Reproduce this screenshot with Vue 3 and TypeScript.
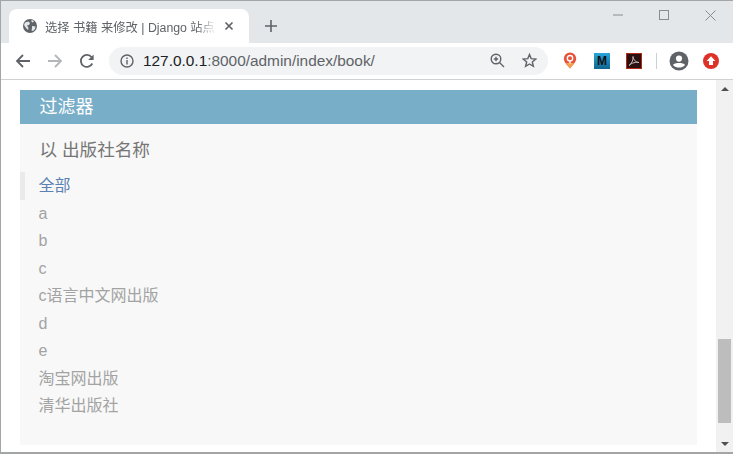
<script setup lang="ts">
const items: string[] = ['a', 'b', 'c', 'c语言中文网出版', 'd', 'e', '淘宝网出版', '清华出版社']
</script>

<template>
  <div class="window">
    <div class="tabstrip">
      <div class="tab">
        <svg class="globe" width="16" height="16" viewBox="0 0 16 16">
          <circle cx="8" cy="8" r="7" fill="#5f6368" />
          <path d="M3 4.5 L6.5 3.5 L8 5 L7 7 L5 7.5 L6.5 10 L6 12 L4 10 L2 7 Z M10 8 L13.5 8.5 L13 11 L11 13 L9.5 12.5 L10 10 Z M9.5 2 L12 3 L11 4.5 L9.5 4 Z" fill="#e4e7ea" />
        </svg>
        <span class="tabtitle">选择 书籍 来修改 | Django 站点管理</span>
        <svg class="tabclose" width="10" height="10" viewBox="0 0 10 10">
          <path d="M1.5 1.5 L8.5 8.5 M8.5 1.5 L1.5 8.5" stroke="#5f6368" stroke-width="1.7" />
        </svg>
      </div>
      <svg class="newtab" width="12" height="12" viewBox="0 0 12 12">
        <path d="M6 0 V12 M0 6 H12" stroke="#5f6368" stroke-width="1.6" />
      </svg>
      <div class="winctrl">
        <svg width="10" height="2" viewBox="0 0 10 2"><path d="M0 1 H10" stroke="#8a8d90" stroke-width="1" /></svg>
        <svg width="10" height="10" viewBox="0 0 10 10"><rect x="0.5" y="0.5" width="9" height="9" fill="none" stroke="#8a8d90" /></svg>
        <svg width="11" height="11" viewBox="0 0 11 11"><path d="M0.5 0.5 L10.5 10.5 M10.5 0.5 L0.5 10.5" stroke="#8a8d90" /></svg>
      </div>
    </div>

    <div class="toolbar">
      <svg class="nav" width="16" height="16" viewBox="0 0 16 16">
        <path d="M15 8 H2 M8 2 L2 8 L8 14" fill="none" stroke="#5f6368" stroke-width="1.8" />
      </svg>
      <svg class="nav" width="16" height="16" viewBox="0 0 16 16">
        <path d="M1 8 H14 M8 2 L14 8 L8 14" fill="none" stroke="#b4b6b8" stroke-width="1.8" />
      </svg>
      <svg class="nav" width="16" height="16" viewBox="0 0 16 16">
        <path d="M13.3 10.5 A6 6 0 1 1 12.6 4.2" fill="none" stroke="#5f6368" stroke-width="1.8" />
        <path d="M14.6 1.5 V7 H9.2 Z" fill="#5f6368" />
      </svg>
      <div class="omnibox">
        <svg width="14" height="14" viewBox="0 0 14 14">
          <circle cx="7" cy="7" r="6" fill="none" stroke="#5f6368" stroke-width="1.4" />
          <path d="M7 6 V10.5 M7 3.5 V5" stroke="#5f6368" stroke-width="1.4" />
        </svg>
        <span class="url"><span class="host">127.0.0.1</span>:8000/admin/index/book/</span>
        <svg class="zoomicon" width="15" height="15" viewBox="0 0 15 15">
          <circle cx="6" cy="6" r="4.8" fill="none" stroke="#5f6368" stroke-width="1.4" />
          <path d="M9.5 9.5 L14 14 M6 3.8 V8.2 M3.8 6 H8.2" stroke="#5f6368" stroke-width="1.4" />
        </svg>
        <svg class="star" width="15" height="15" viewBox="0 0 15 15">
          <path d="M7.5 1.5 L9.2 5.6 L13.8 6 L10.3 8.9 L11.4 13.3 L7.5 11 L3.6 13.3 L4.7 8.9 L1.2 6 L5.8 5.6 Z" fill="none" stroke="#5f6368" stroke-width="1.4" />
        </svg>
      </div>
      <div class="exts">
        <svg width="14" height="17" viewBox="0 0 14 17">
          <path d="M7 16.5 C4 13 .8 10 .8 6.6 A6.2 6.2 0 0 1 13.2 6.6 C13.2 10 10 13 7 16.5 Z" fill="#e8503a" />
          <path d="M7 16.5 C5.5 14.5 4 13 3 11 H11 C10 13 8.5 14.5 7 16.5 Z" fill="#f3a14b" />
          <circle cx="7" cy="6.2" r="2.7" fill="none" stroke="#fff" stroke-width="1.4" />
          <path d="M7 8.5 V11.5" stroke="#fff" stroke-width="1.4" />
        </svg>
        <div class="ext-m">M</div>
        <div class="ext-pdf">
          <svg width="12" height="12" viewBox="0 0 12 12">
            <path d="M1 10.5 C3.5 9 5.5 5 5 1.5 C5.5 5 8 7.5 11 7.5 C8 7 4 7.5 1 10.5 Z" fill="none" stroke="#c9bdbd" stroke-width="1" />
          </svg>
        </div>
        <div class="sep"></div>
        <svg class="avatar" width="20" height="20" viewBox="0 0 20 20">
          <circle cx="10" cy="10" r="9.5" fill="#5f6368" />
          <circle cx="10" cy="7.6" r="3.1" fill="#fff" />
          <path d="M4 14 C5.5 11.4 14.5 11.4 16 14 C14.5 16 12 16.6 10 16.6 C8 16.6 5.5 16 4 14 Z" fill="#fff" />
        </svg>
        <svg width="16" height="16" viewBox="0 0 16 16">
          <circle cx="8" cy="8" r="8" fill="#dd3227" />
          <path d="M8 3.2 L12.4 8 H10 V12 H6 V8 H3.6 Z" fill="#fff" />
        </svg>
      </div>
    </div>

    <div class="viewport">
      <div class="page">
        <div class="filter">
          <h2 class="filter-title">过滤器</h2>
          <h3 class="filter-sub">以 出版社名称</h3>
          <ul class="filter-list">
            <li class="selected"><a class="link-on">全部</a></li>
            <li v-for="item in items" :key="item"><a>{{ item }}</a></li>
          </ul>
        </div>
      </div>
      <div class="scrollbar">
        <div class="arrow-up"></div>
        <div class="track"><div class="thumb"></div></div>
        <div class="arrow-down"></div>
      </div>
    </div>
  </div>
</template>

<style>
html, body { margin: 0; padding: 0; overflow: hidden; background: #fff; }
</style>

<style scoped>
.window {
  width: 733px;
  height: 454px;
  box-sizing: border-box;
  border-top: 1px solid #a3a5a7;
  border-left: 1px solid #a3a5a7;
  border-bottom: 2px solid #a3a5a7;
  display: flex;
  flex-direction: column;
  overflow: hidden;
  font-family: "Liberation Sans", "Noto Sans CJK SC", sans-serif;
}
.tabstrip {
  height: 42px;
  flex: none;
  background: #e4e7ea;
  display: flex;
  align-items: flex-end;
  padding-left: 8px;
}
.tab {
  width: 240px;
  height: 34px;
  box-sizing: border-box;
  background: #fff;
  border-radius: 8px 8px 0 0;
  display: flex;
  align-items: center;
  padding: 0 15px 0 13px;
}
.globe { flex: none; margin-right: 7px; }
.tabtitle {
  flex: 1;
  min-width: 0;
  font-size: 12.3px;
  color: #5f6368;
  white-space: nowrap;
  overflow: hidden;
  margin-top: 1px;
  -webkit-mask-image: linear-gradient(to right, #000 88%, transparent 100%);
  mask-image: linear-gradient(to right, #000 88%, transparent 100%);
}
.tabclose { flex: none; margin-left: 7px; }
.newtab { margin: 0 0 11px 16px; flex: none; }
.winctrl {
  margin-left: auto;
  align-self: flex-start;
  display: flex;
  align-items: center;
  gap: 36px;
  height: 28px;
  padding-right: 17px;
}
.toolbar {
  height: 37px;
  flex: none;
  box-sizing: border-box;
  background: #fff;
  border-bottom: 1px solid #d0d1d2;
  display: flex;
  align-items: center;
  padding: 0 0 1px 14px;
}
.nav { flex: none; margin-right: 16px; }
.omnibox {
  width: 439px;
  height: 28px;
  margin-left: -2px;
  box-sizing: border-box;
  flex: none;
  background: #f1f3f4;
  border-radius: 14px;
  display: flex;
  align-items: center;
  padding: 0 11px 0 11px;
}
.url {
  font-size: 15.4px;
  color: #5f6368;
  margin-left: 9px;
  white-space: nowrap;
}
.host { color: #202124; }
.zoomicon { margin-left: auto; }
.star { margin-left: 17px; }
.exts {
  display: flex;
  align-items: center;
  flex: none;
  padding-left: 15px;
}
.ext-m {
  width: 16px;
  height: 16px;
  margin-left: 17px;
  background: linear-gradient(#29a5dc, #11668f);
  color: #111;
  font-size: 12px;
  font-weight: 700;
  line-height: 16px;
  text-align: center;
}
.ext-pdf {
  width: 16px;
  height: 16px;
  box-sizing: border-box;
  margin-left: 16px;
  background: #2b1012;
  border: 1px solid #b42a14;
  display: flex;
  align-items: center;
  justify-content: center;
}
.sep { width: 1px; height: 16px; background: #cfd0d1; margin-left: 14px; }
.avatar { margin: 0 14px 0 12px; }
.viewport {
  flex: 1;
  min-height: 0;
  display: flex;
  background: #fff;
}
.page {
  flex: 1;
  min-width: 0;
  padding: 10px 19px 0 19px;
}
.filter {
  height: 355px;
  background: #f8f8f8;
  color: #999;
}
.filter-title {
  margin: 0;
  height: 34px;
  box-sizing: border-box;
  padding-left: 19.5px;
  background: #79aec8;
  color: #fff;
  font-size: 18px;
  font-weight: 400;
  line-height: 34px;
}
.filter-sub {
  margin: 0;
  padding: 15px 20px 0 19.5px;
  height: 48px;
  box-sizing: border-box;
  font-size: 17.6px;
  font-weight: 400;
  line-height: 23px;
  color: #757575;
}
.filter-list {
  list-style: none;
  margin: 0;
  padding: 0;
}
.filter-list li {
  height: 27.5px;
  line-height: 27.5px;
  font-size: 16px;
  padding-left: 18.5px;
  color: #a3a3a3;
}
.filter-list li.selected {
  border-left: 5px solid #eaeaea;
  padding-left: 13.5px;
}
.link-on { color: #5b80b2; }
.scrollbar {
  width: 17px;
  flex: none;
  background: #f1f1f1;
  display: flex;
  flex-direction: column;
  align-items: center;
}
.arrow-up, .arrow-down {
  width: 0;
  height: 0;
  border-left: 4px solid transparent;
  border-right: 4px solid transparent;
  flex: none;
}
.arrow-up { border-bottom: 4px solid #505050; margin: 7px 0 6px; }
.arrow-down { border-top: 4px solid #505050; margin: 6px 0 6px; }
.track {
  flex: 1;
  width: 100%;
  display: flex;
  flex-direction: column;
  justify-content: flex-end;
  align-items: center;
}
.thumb {
  width: 13px;
  height: 84px;
  background: #bdbdbd;
  margin-bottom: 13px;
}
</style>
